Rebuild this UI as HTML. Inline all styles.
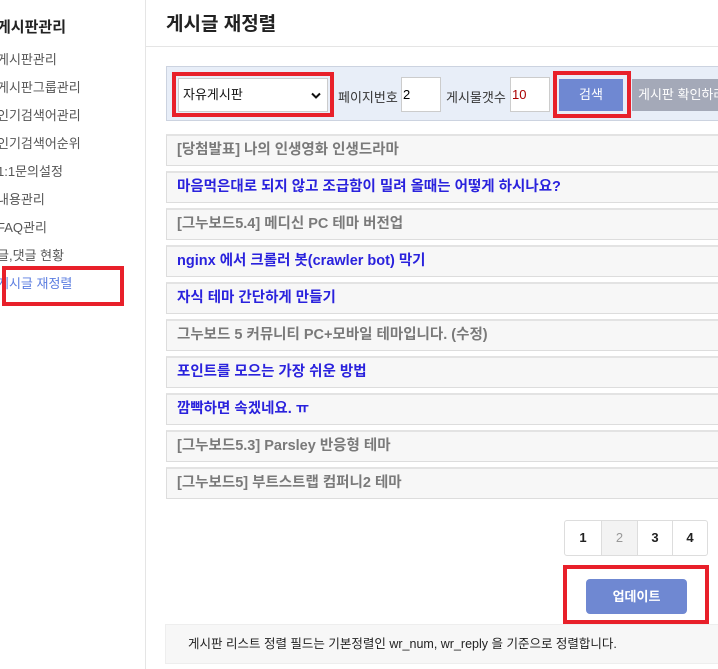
<html><head><style>
body{margin:0;width:718px;height:669px;overflow:hidden;background:#fff;font-family:"Liberation Sans","Noto Sans CJK KR",sans-serif;position:relative}
.side{position:absolute;left:0;top:0;width:145px;height:669px;border-right:1px solid #e5e5e5}
.side h2{position:absolute;left:-3px;top:16px;margin:0;font-size:15px;font-weight:bold;color:#222}
.side a{position:absolute;left:-3px;font-size:13px;color:#555;text-decoration:none}
.rb{position:absolute;border:4px solid #e8202a;box-sizing:border-box}
.hd{position:absolute;left:146px;top:0;right:0;height:46px;border-bottom:1px solid #e5e5e5}
.hd h1{position:absolute;left:20px;top:9px;margin:0;font-size:19px;font-weight:bold;color:#222}
.sb{position:absolute;left:166px;top:66px;width:560px;height:55px;background:#e8eef8;border:1px solid #ccd3e0;box-sizing:border-box}
.abs{position:absolute}
.it{position:absolute;left:166px;width:560px;height:32px;border:1px solid #ddd;border-top:2px solid #e3e3e3;background:#f7f7f7;box-sizing:border-box;font-size:14.5px;font-weight:bold;line-height:28px;padding-left:10px;white-space:nowrap}
.g{color:#7a7a7a}.b{color:#2a22dd}
.pg{position:absolute;top:520px;height:36px;border:1px solid #ddd;box-sizing:border-box;text-align:center;line-height:34px;font-size:13px;font-weight:bold;color:#222}
</style></head><body>
<div class="side">
<h2>게시판관리</h2>
<a style="top:49px">게시판관리</a>
<a style="top:77px">게시판그룹관리</a>
<a style="top:105px">인기검색어관리</a>
<a style="top:133px">인기검색어순위</a>
<a style="top:161px">1:1문의설정</a>
<a style="top:189px">내용관리</a>
<a style="top:217px">FAQ관리</a>
<a style="top:245px">글,댓글 현황</a>
<a style="top:273px;color:#5b7de0">게시글 재정렬</a>
</div>
<div class="rb" style="left:2px;top:266px;width:122px;height:40px"></div>
<div class="hd"><h1>게시글 재정렬</h1></div>
<div class="sb"></div>
<div class="abs" style="left:178px;top:78px;width:150px;height:34px;background:#fff;border:1px solid #ccc;box-sizing:border-box;font-size:13px;line-height:32px;padding-left:4px;color:#111">자유게시판<svg style="position:absolute;right:6px;top:13px" width="10" height="7" viewBox="0 0 10 7"><path d="M1 1.5L5 5.5L9 1.5" stroke="#111" stroke-width="2" fill="none"/></svg></div>
<div class="rb" style="left:172px;top:72px;width:162px;height:45px"></div>
<div class="abs" style="left:338px;top:87px;font-size:13px;color:#333">페이지번호</div>
<div class="abs" style="left:401px;top:77px;width:40px;height:35px;background:#fff;border:1px solid #ccc;box-sizing:border-box;font-size:13px;line-height:33px;padding-left:1px">2</div>
<div class="abs" style="left:446px;top:87px;font-size:13px;color:#333">게시물갯수</div>
<div class="abs" style="left:510px;top:77px;width:40px;height:35px;background:#fff;border:1px solid #ccc;box-sizing:border-box;font-size:13px;line-height:33px;padding-left:1px;color:#a00">10</div>
<div class="abs" style="left:559px;top:79px;width:64px;height:32px;background:#6f88d2;color:#fff;font-size:13px;text-align:center;line-height:32px">검색</div>
<div class="rb" style="left:553px;top:71px;width:78px;height:47px"></div>
<div class="abs" style="left:632px;top:79px;width:100px;height:32px;background:#a4a9b8;color:#fff;font-size:13px;line-height:32px;padding-left:6px;white-space:nowrap">게시판 확인하러</div>
<div class="it g" style="top:134px">[당첨발표] 나의 인생영화 인생드라마</div>
<div class="it b" style="top:171px">마음먹은대로 되지 않고 조급함이 밀려 올때는 어떻게 하시나요?</div>
<div class="it g" style="top:208px">[그누보드5.4] 메디신 PC 테마 버전업</div>
<div class="it b" style="top:245px">nginx 에서 크롤러 봇(crawler bot) 막기</div>
<div class="it b" style="top:282px">자식 테마 간단하게 만들기</div>
<div class="it g" style="top:319px">그누보드 5 커뮤니티 PC+모바일 테마입니다. (수정)</div>
<div class="it b" style="top:356px">포인트를 모으는 가장 쉬운 방법</div>
<div class="it b" style="top:393px">깜빡하면 속겠네요. ㅠ</div>
<div class="it g" style="top:430px">[그누보드5.3] Parsley 반응형 테마</div>
<div class="it g" style="top:467px">[그누보드5] 부트스트랩 컴퍼니2 테마</div>
<div class="pg" style="left:564px;width:38px;border-radius:3px 0 0 3px">1</div>
<div class="pg" style="left:601px;width:37px;background:#f3f3f3;color:#999;font-weight:normal">2</div>
<div class="pg" style="left:637px;width:36px">3</div>
<div class="pg" style="left:672px;width:36px;border-radius:0 3px 3px 0">4</div>
<div class="abs" style="left:586px;top:579px;width:101px;height:35px;background:#6f88d2;border-radius:4px;color:#fff;font-size:13px;font-weight:bold;text-align:center;line-height:35px">업데이트</div>
<div class="rb" style="left:563px;top:565px;width:146px;height:59px"></div>
<div class="abs" style="left:165px;top:624px;width:560px;height:40px;background:#f7f7f7;border:1px solid #eee;box-sizing:border-box;font-size:12.5px;color:#222;line-height:38px;padding-left:22px;white-space:nowrap">게시판 리스트 정렬 필드는 기본정렬인 wr_num, wr_reply 을 기준으로 정렬합니다.</div>
</body></html>
